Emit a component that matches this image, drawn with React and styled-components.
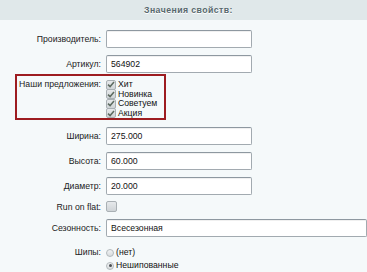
import React from "react";
import styled, { createGlobalStyle } from "styled-components";

const Global = createGlobalStyle`
  html, body {
    margin: 0;
    padding: 0;
    overflow: hidden;
    background: #f5f9fa;
  }
  body {
    font-family: "Liberation Sans", Arial, sans-serif;
    font-size: 8.7px;
    color: #1e1e1e;
  }
`;

const Page = styled.div`
  width: 367px;
  height: 272px;
  background: #f5f9fa;
  display: flex;
  flex-direction: column;
`;

const Header = styled.div`
  height: 22px;
  background: #e0e8ea;
  display: flex;
  align-items: center;
  justify-content: center;
  padding-left: 10px;
  font-weight: bold;
  font-size: 8.7px;
  letter-spacing: 0.45px;
  color: #57686d;
  text-shadow: 0 1px 0 #fff;
`;

const Row = styled.div`
  display: flex;
  align-items: ${(p) => p.$align || "center"};
  margin-top: ${(p) => p.$top || 0}px;
  line-height: ${(p) => p.$line || "normal"};
`;

const Label = styled.div`
  flex: none;
  width: ${(p) => p.$width || 106}px;
  box-sizing: border-box;
  padding-right: 5px;
  text-align: right;
  color: #222;
`;

const Highlight = styled(Row)`
  margin-left: 15px;
  width: 151px;
  height: 46px;
  box-sizing: border-box;
  border: 2px solid #9d1c20;
  padding-top: 4px;
`;

const Field = styled.input`
  width: ${(p) => p.$width || 146}px;
  height: 18px;
  box-sizing: border-box;
  margin: 0;
  padding: 0 4px;
  border: 1px solid #a2aab0;
  border-top-color: #8e98a0;
  border-radius: 2px;
  background: #fff;
  box-shadow: inset 0 1px 0 rgba(0, 0, 0, 0.06);
  font-family: "Liberation Sans", Arial, sans-serif;
  font-size: 8.7px;
  color: #111;
  outline: none;
`;

const List = styled.div`
  display: flex;
  flex-direction: column;
`;

const Option = styled.div`
  display: flex;
  align-items: center;
  height: ${(p) => p.$h}px;
  color: #111;
`;

const Box = styled.span`
  flex: none;
  width: ${(p) => p.$size || 10}px;
  height: ${(p) => p.$size || 10}px;
  box-sizing: border-box;
  border: 1px solid #a9b0b4;
  border-radius: 2px;
  background: linear-gradient(#e6e9eb, #cfd4d7);
  display: flex;
  align-items: center;
  justify-content: center;
  margin-right: 2px;
`;

const Radio = styled.span`
  flex: none;
  width: 8px;
  height: 8px;
  box-sizing: border-box;
  border-radius: 50%;
  border: 1px solid #b3babd;
  background: linear-gradient(#f1f3f4, #d8dcde);
  margin-right: 2px;
  display: flex;
  align-items: center;
  justify-content: center;

  &::after {
    content: "";
    display: ${(p) => (p.$on ? "block" : "none")};
    width: 3px;
    height: 3px;
    border-radius: 50%;
    background: #4a4f52;
  }
`;

const Check = () => (
  <svg width="8" height="7" viewBox="0 0 8 7">
    <path d="M1 3.6 L3.1 5.6 L7 1" fill="none" stroke="#5d6b61" strokeWidth="1.5" />
  </svg>
);

const offers = ["Хит", "Новинка", "Советуем", "Акция"];

export default function App() {
  return (
    <Page>
      <Global />
      <Header>Значения свойств:</Header>
      <Row $top={10}>
        <Label>Производитель:</Label>
        <Field readOnly value="" />
      </Row>
      <Row $top={7}>
        <Label>Артикул:</Label>
        <Field readOnly value="564902" />
      </Row>
      <Highlight $top={1} $align="flex-start" $line="9.5px">
        <Label $width={89}>Наши предложения:</Label>
        <List>
          {offers.map((o) => (
            <Option key={o} $h={9.5}>
              <Box>
                <Check />
              </Box>
              {o}
            </Option>
          ))}
        </List>
      </Highlight>
      <Row $top={7}>
        <Label>Ширина:</Label>
        <Field readOnly value="275.000" />
      </Row>
      <Row $top={7}>
        <Label>Высота:</Label>
        <Field readOnly value="60.000" />
      </Row>
      <Row $top={7}>
        <Label>Диаметр:</Label>
        <Field readOnly value="20.000" />
      </Row>
      <Row $top={6}>
        <Label>Run on flat:</Label>
        <Box $size={11} />
      </Row>
      <Row $top={7}>
        <Label>Сезонность:</Label>
        <Field readOnly value="Всесезонная" $width={290} />
      </Row>
      <Row $top={9} $align="flex-start" $line="13px">
        <Label>Шипы:</Label>
        <List>
          <Option $h={13}>
            <Radio />
            (нет)
          </Option>
          <Option $h={13}>
            <Radio $on />
            Нешипованные
          </Option>
        </List>
      </Row>
    </Page>
  );
}
